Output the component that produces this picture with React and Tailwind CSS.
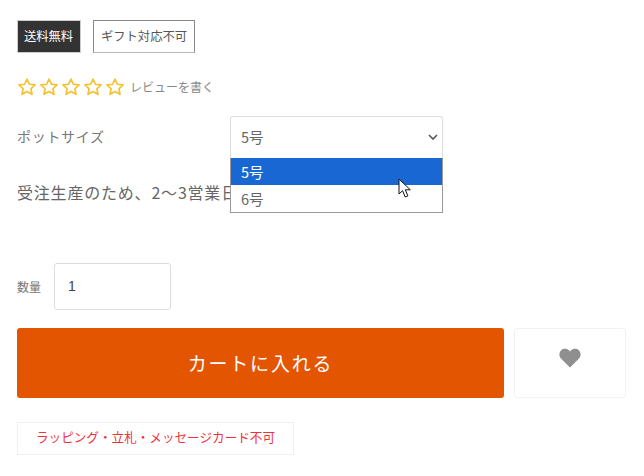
import { useState } from "react";

const font = { fontFamily: '"Noto Sans CJK JP", sans-serif' };

function Star() {
  return (
    <svg width="20" height="20" viewBox="0 0 24 24" fill="none" stroke="#f6c02c" strokeWidth="2" strokeLinejoin="round">
      <path d="M12 2.5l2.9 6.2 6.8.8-5 4.6 1.3 6.7-6-3.3-6 3.300 1.300-6.700-5-4.600 6.800-.8z" />
    </svg>
  );
}

function Cursor() {
  return (
    <svg className="absolute left-[167px] top-[20px]" width="16" height="22" viewBox="0 0 16 22">
      <path d="M1 1v15l3.600-3.300 2.600 6.300 2.700-1.100-2.600-6.100h5z" fill="#fff" stroke="#111" strokeWidth="1" strokeLinejoin="round" />
    </svg>
  );
}

export default function App() {
  const [qty, setQty] = useState("1");

  return (
    <div className="h-[476px] w-[644px] overflow-hidden bg-white pl-[17px] pt-[20px] text-[#666]" style={font}>
      <div className="flex gap-3">
        <span className="flex h-[33px] w-[64px] items-center justify-center border border-[#ccc] bg-[#333] pb-px pr-px text-[12.3px] text-white">
          送料無料
        </span>
        <span className="flex h-[33px] w-[102px] items-center justify-center border border-[#888] border-b-[#bbb] pb-px text-[12.3px] text-[#555]">
          ギフト対応不可
        </span>
      </div>

      <div className="mt-[24px] flex h-[20px] items-center">
        <div className="flex gap-[2px]">
          <Star />
          <Star />
          <Star />
          <Star />
          <Star />
        </div>
        <a className="ml-[5px] text-xs text-[#888]">レビューを書く</a>
      </div>

      <div className="relative mt-[19px] flex h-[42px] items-center">
        <label className="w-[213px] pb-[2px] text-sm tracking-[0.7px] text-[#777]">ポットサイズ</label>
        <div className="flex h-[42px] w-[213px] items-center justify-between rounded-t-[3px] border border-b-0 border-[#ddd] pb-[2px] pl-[10px] pr-[4px] text-[14.5px]">
          <span>5号</span>
          <svg width="10" height="6" viewBox="0 0 10 6" fill="none" stroke="#555" strokeWidth="1.6">
            <path d="M1 1l4 4 4-4" />
          </svg>
        </div>

        <div className="absolute left-[213px] top-[42px] z-10 h-[55px] w-[213px] border border-t-0 border-[#999] bg-white text-[14.5px]">
          <div className="flex h-[27px] items-center bg-[#1967d2] pl-[10px] text-white">5号</div>
          <div className="mt-px flex h-[26px] items-center pl-[10px]">6号</div>
          <Cursor />
        </div>
      </div>

      <p className="mt-[22px] whitespace-nowrap text-base leading-6 tracking-[0.8px] text-[#666]">
        受注生産のため、2〜3営業日
      </p>

      <div className="mt-[59px] flex items-center">
        <label className="w-[37px] text-xs text-[#777]">数量</label>
        <input
          value={qty}
          onChange={(e) => setQty(e.target.value)}
          className="h-[47px] w-[117px] rounded-[3px] border border-[#ddd] pb-[2px] pl-[13px] text-sm text-[#444] outline-none"
          style={{ fontFamily: '"Liberation Sans", sans-serif' }}
        />
      </div>

      <div className="mt-[18px] flex gap-[10px]">
        <button className="h-[70px] w-[487px] rounded-[3px] bg-[#e35500] text-[19px] tracking-[1.8px] text-white">
          カートに入れる
        </button>
        <button className="flex h-[70px] w-[112px] items-center justify-center rounded-[3px] border border-[#f2f2f2] pb-[10px]">
          <svg width="22" height="20" viewBox="0 0 22 20" fill="#8f8f8f">
            <path d="M11 19.500L2.200 10.700C-.2 8.300-.1 4.500 2.200 2.300c2.300-2.100 5.900-1.900 8 .3l.8.900.8-.9c2.100-2.200 5.700-2.400 8-.3 2.300 2.200 2.400 6 0 8.400z" />
          </svg>
        </button>
      </div>

      <div className="mt-[24px] flex h-[33px] w-[277px] items-center justify-center border border-[#f0f0f0] pb-[2px] text-[12.6px] text-[#f0323c]">
        ラッピング・立札・メッセージカード不可
      </div>
    </div>
  );
}
